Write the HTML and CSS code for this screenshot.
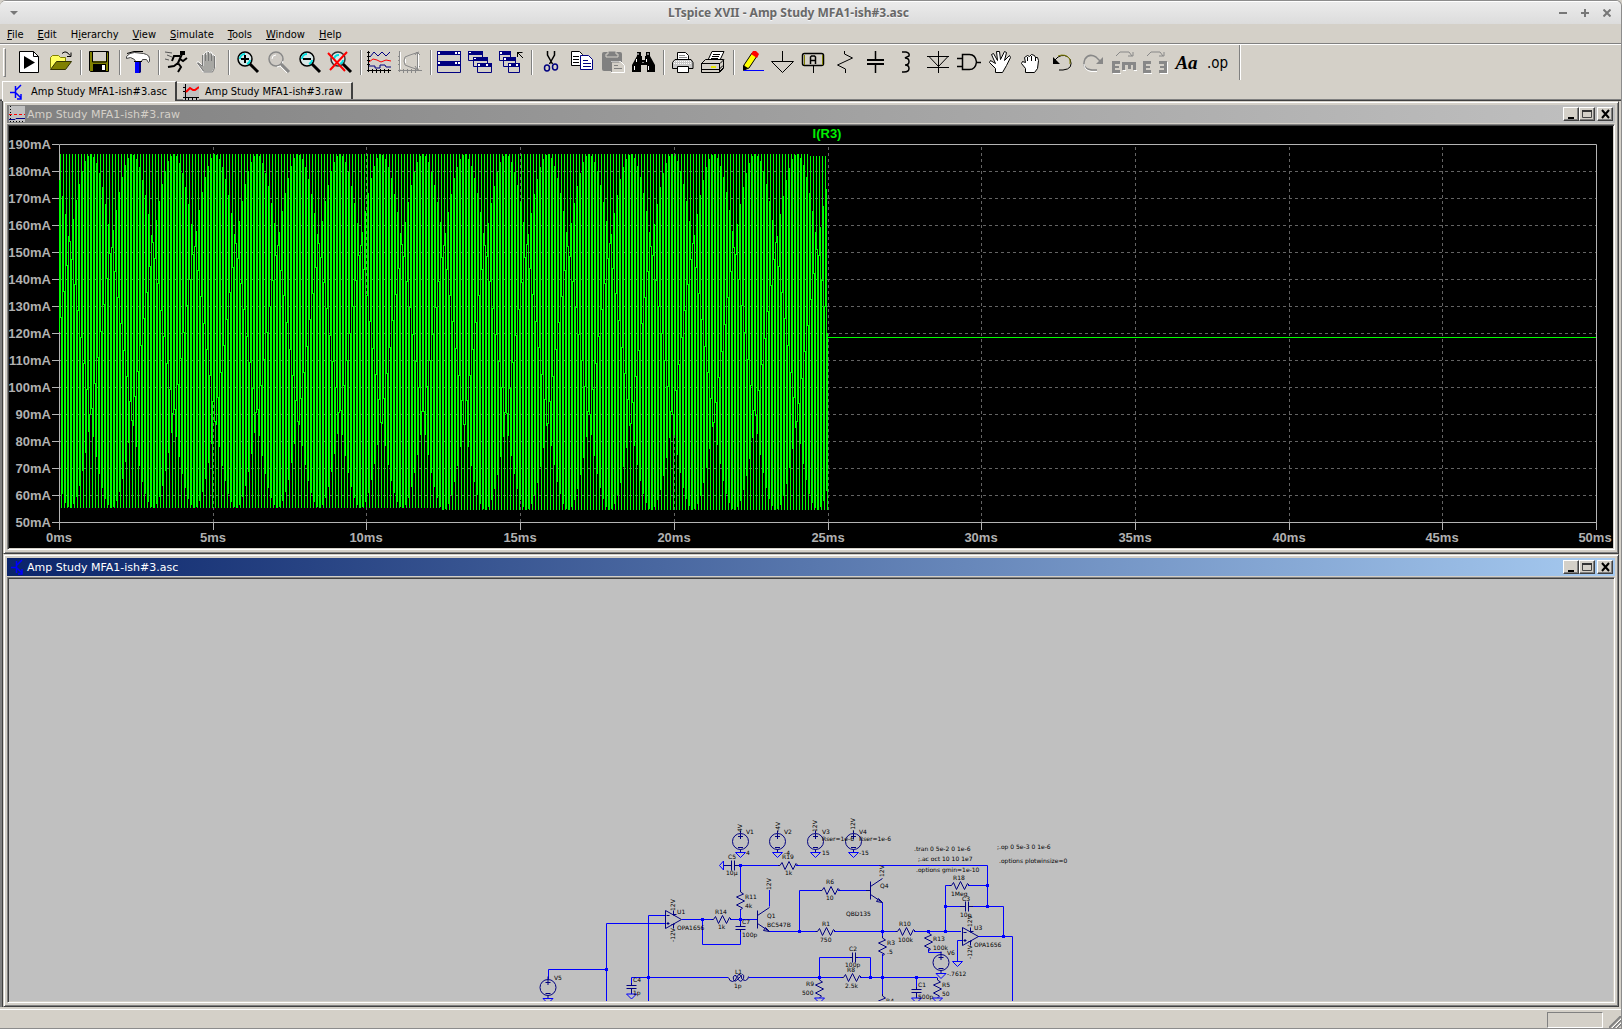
FILE: index.html
```html
<!DOCTYPE html>
<html lang="en">
<head>
<meta charset="utf-8">
<title>LTspice XVII - Amp Study MFA1-ish#3.asc</title>
<link rel="stylesheet" href="styles.css">
</head>
<body>
<div class="app">
  <header class="titlebar">
    <button class="frame-btn" aria-label="Window menu"><svg width="8" height="6"><path d="M0 1h8L4 5z" fill="#777"/></svg></button>
    <h1 class="app-title">LTspice XVII - Amp Study MFA1-ish#3.asc</h1>
    <div class="frame-btns">
      <button class="frame-btn" aria-label="Minimize"><svg width="8" height="8"><path d="M0 4h8" stroke="#777" stroke-width="2"/></svg></button>
      <button class="frame-btn" aria-label="Maximize"><svg width="8" height="8"><path d="M0 4h8M4 0v8" stroke="#777" stroke-width="2"/></svg></button>
      <button class="frame-btn" aria-label="Close"><svg width="8" height="8"><path d="M0.500 0.500l7 7M7.500 0.500l-7 7" stroke="#777" stroke-width="2"/></svg></button>
    </div>
  </header>

  <nav class="menubar" aria-label="Main menu">
    <button><u>F</u>ile</button>
    <button><u>E</u>dit</button>
    <button>H<u>i</u>erarchy</button>
    <button><u>V</u>iew</button>
    <button><u>S</u>imulate</button>
    <button><u>T</u>ools</button>
    <button><u>W</u>indow</button>
    <button><u>H</u>elp</button>
  </nav>

  <div class="toolbar" role="toolbar" aria-label="Tools">
    <span class="grip"></span>
    <button aria-label="Run"><svg viewBox="0 0 31 24"><path d="M5.500.5h14l5 5v16h-19z" fill="#fff" stroke="#000"/><path d="M19.500.5v5h5" fill="none" stroke="#000"/><path d="M10 5v13l11-6.500z"/></svg></button>
    <button aria-label="Open"><svg viewBox="0 0 31 24"><path d="M5.500 17.500v-11l2-2h6l2 2h5v4" fill="#ffff60" stroke="#808000"/><path d="M5.500 18.500l6-8h15l-6 8z" fill="#808000" stroke="#333300"/><path d="M17 2.500q4-4 8 2m1-3v4h-4" fill="none" stroke="#000"/></svg></button>
    <span class="sep"></span>
    <button aria-label="Save"><svg viewBox="0 0 31 24"><path d="M5.500.5h19v20h-18l-1-1z" fill="#808000" stroke="#000"/><path d="M9 1h13v9H9z" fill="#d4d0c8"/><path d="M8.500 1v10h14V1M22 1h2" fill="none" stroke="#000"/><path d="M9 13h13v7H9z"/><path d="M18 14h3v5h-3z" fill="#fff"/></svg></button>
    <span class="sep"></span>
    <button aria-label="Control panel"><svg viewBox="0 0 31 24"><path d="M3.500 7.500v-2q3-4 8-4l9 1 3 1q3 1 3 4v3l-1 1-2-3h-4l-1 2h-6l-1-2-4-2z" fill="#fff" stroke="#444"/><path d="M12 10h4v12h-4z" fill="#0000ff"/><path d="M16 10h2v11l-1 1h-1z" fill="#000080"/><path d="M4 2.500l7-2h9M11 10.500h8" fill="none" stroke="#000"/></svg></button>
    <span class="sep"></span>
    <button aria-label="Run simulation"><svg viewBox="0 0 31 24"><path d="M18 0h5v4h-5z"/><path d="M20 3l-4 9M18 5h-6l-2 5M18 8l3 2 4-3M16 12l-4 3-6 1M16 12l3 4-3 5" fill="none" stroke="#000" stroke-width="2"/><path d="M3 1l7 1M5 4l5 2M3 8l4 1" stroke="#555"/></svg></button>
    <button aria-label="Halt"><svg viewBox="0 0 31 24"><path d="M10 21l-6-9q0-3 3 0l3 3V4q2-3 3 0V1q2-2 3 0v1q2-2 3 0v2q2-1 3 1v11l-3 5z" fill="#a8a8a4" stroke="#fff"/><path d="M10.500 20l-6-8 5 3V4m3 6V2m3 8V1m3 9V3m3 2v12l-2 4h-9" fill="none" stroke="#777"/></svg></button>
    <span class="sep"></span>
    <button aria-label="Zoom in"><svg viewBox="0 0 31 24"><circle cx="13" cy="8" r="7" fill="#d8e8e8" stroke="#000" stroke-width="1.500"/><path d="M8 8a5 5 0 0 1 5-5M18 9a5 5 0 0 1-3 4" fill="none" stroke="#00e0e0" stroke-width="2"/><path d="M9 8h8M13 4v8" stroke="#000" stroke-width="2"/><path d="M18 13l8 8" stroke="#000" stroke-width="3"/></svg></button>
    <button aria-label="Pan"><svg viewBox="0 0 31 24"><circle cx="13" cy="8" r="7" fill="#cecac4" stroke="#888" stroke-width="1.500"/><path d="M9 8a4 4 0 0 1 4-4M20 10a7 7 0 0 1-6 6" fill="none" stroke="#fff"/><path d="M18 13l8 8" stroke="#888" stroke-width="3"/><path d="M17 15l7 7" stroke="#fff"/></svg></button>
    <button aria-label="Zoom out"><svg viewBox="0 0 31 24"><circle cx="13" cy="8" r="7" fill="#d8e8e8" stroke="#000" stroke-width="1.500"/><path d="M8 8a5 5 0 0 1 5-5M18 9a5 5 0 0 1-3 4" fill="none" stroke="#00e0e0" stroke-width="2"/><path d="M9 8h8" stroke="#000" stroke-width="2"/><path d="M18 13l8 8" stroke="#000" stroke-width="3"/></svg></button>
    <button aria-label="Zoom full extents"><svg viewBox="0 0 31 24"><circle cx="13" cy="8" r="7" fill="#d8e8e8" stroke="#333" stroke-width="1.500"/><path d="M9 8a5 5 0 0 1 5-4M18 9a5 5 0 0 1-3 4" fill="none" stroke="#00e0e0" stroke-width="2"/><path d="M18 13l8 8" stroke="#000" stroke-width="3"/><path d="M3 2l17 18M22 1L5 19" stroke="#f00" stroke-width="2"/></svg></button>
    <span class="sep"></span>
    <button aria-label="Autorange"><svg viewBox="0 0 31 24"><path d="M4.500 0v21M3 19.500h24M3 1.500h3M3 5.500h3M3 9.500h3M3 13.500h3M8.500 18v4M12.500 18v4M16.500 18v4M20.500 18v4M24.500 18v4" stroke="#000"/><path d="M6 6l4-5 4 4 4-4 4 4 4-4M5 15h6v2h5v-3h5l1 2h5" fill="none" stroke="#000080"/><path d="M5 11l4-3 4 1 4 2 5-2 5 1" fill="none" stroke="#f00"/></svg></button>
    <button aria-label="FFT"><svg viewBox="0 0 31 24"><path d="M4.500 0v21M3 19.500h24M3 5.500h3M3 9.500h3M3 13.500h3M8.500 18v4M12.500 18v4M16.500 18v4M20.500 18v4M22.500 1v17M24 1l-9 3-5 2-1 4 1 4 5 2 9 3M20 4l2-3 3 3M20 15l2 3 3-3" stroke="#888" fill="none"/><path d="M5.500 1v17M23.500 3v14M10.500 8v4" stroke="#fff"/></svg></button>
    <span class="sep"></span>
    <button aria-label="Tile"><svg viewBox="0 0 31 24"><path d="M3.500.5h23v21h-23z" fill="#d4d0c8" stroke="#000080"/><path d="M3 0h24v4H3zM3 10h24v5H3z" fill="#000080"/><path d="M4 1h2v2H4zM21 1h2v2h-2zM24 1h2v2h-2zM4 11h2v2H4zM21 11h2v2h-2zM24 11h2v2h-2z" fill="#fff"/></svg></button>
    <button aria-label="Cascade"><svg viewBox="0 0 31 24"><g fill="#d4d0c8" stroke="#000080"><path d="M3.500.5h14v9h-14zM8.500 6.500h14v9h-14zM12.500 12.500h14v9h-14z"/></g><path d="M3 0h15v4H3zM8 6h15v4H8zM12 12h15v4H12z" fill="#000080"/><path d="M4 1h2v1H4zM9 7h2v1H9zM13 13h2v2h-2zM21 13h2v2h-2z" fill="#fff"/></svg></button>
    <button aria-label="Close all"><svg viewBox="0 0 31 24"><g fill="#d4d0c8" stroke="#000080"><path d="M3.500.5h11v9h-11zM7.500 6.500h12v9h-12zM12.500 12.500h11v9h-11z"/></g><path d="M3 0h12v4H3zM7 6h13v4H7zM12 12h12v4H12z" fill="#000080"/><path d="M4 1h2v2H4zM8 7h2v2H8zM13 13h2v2h-2zM20 13h2v2h-2z" fill="#fff"/><path d="M21.500 6V1.500h5M21 1l6 6" fill="none" stroke="#000"/></svg></button>
    <span class="sep"></span>
    <button aria-label="Cut"><svg viewBox="0 0 31 24"><path d="M12.500 0v4l5 9M19.500 0v4l-5 9" fill="none" stroke="#000" stroke-width="1.500"/><g fill="none" stroke="#000080" stroke-width="1.500"><ellipse cx="12" cy="17" rx="2.500" ry="3"/><ellipse cx="20" cy="16" rx="2.500" ry="3"/></g></svg></button>
    <button aria-label="Copy"><svg viewBox="0 0 31 24"><path d="M5.500.5h8l3 3v11h-11z" fill="#fff" stroke="#000"/><path d="M7 5.500h6M7 8.500h6M7 11.500h6" stroke="#000"/><path d="M14.500 4.500h8l4 4v10h-12z" fill="#fff" stroke="#000080"/><path d="M17 9.500h5M17 12.500h8M17 15.500h8" stroke="#000080"/></svg></button>
    <button aria-label="Paste"><svg viewBox="0 0 31 24"><rect x="5" y="1" width="20" height="19" rx="2" fill="#808080"/><path d="M11 0h8v3h2v3H9V3h2z" fill="#808080" stroke="#d4d0c8"/><path d="M14.500 10.500h9l4 4v7h-13z" fill="#d4d0c8" stroke="#fff"/><path d="M17 14.500h4M17 17.500h8M14.500 21v-10h8" fill="none" stroke="#808080"/></svg></button>
    <button aria-label="Find"><svg viewBox="0 0 31 24"><path d="M9 1h4v4h1v4h3V5h1V1h4v4l5 9v7h-8v-7h-6v7H4v-7l5-9z"/><path d="M10 2v2M20 2v2M8.500 8v3M18.500 8v3M6.500 15v4M20.500 15v4M15 11v1" stroke="#fff"/></svg></button>
    <span class="sep"></span>
    <button aria-label="Print"><svg viewBox="0 0 31 24"><path d="M10.500 8.500v-7h8l3 3v4" fill="#fff" stroke="#000"/><path d="M12 4.500h6M12 6.500h8" stroke="#888"/><path d="M8 8.500h16l2 3v6H5.500v-6z" fill="#c8c8c8" stroke="#000"/><path d="M10.500 15.500h11v6h-11z" fill="#fff" stroke="#000"/><path d="M7 10.500h17M7 12.500h17" stroke="#fff" stroke-dasharray="1"/></svg></button>
    <button aria-label="Print setup"><svg viewBox="0 0 31 24"><path d="M10 9l4-8.500h12L22 9z" fill="#fff" stroke="#000"/><path d="M15 3.500h7M14 5.500h7M13 7.500h7" stroke="#000"/><path d="M3.500 12.500l4-4h18v9l-4 4h-18z" fill="#d4d0c8" stroke="#000"/><path d="M3 12.500h19l4-4M21.500 12v9M3 18.500h18l4-4M21 21l5-5" fill="none" stroke="#000"/><path d="M13 15h5v2h-5z" fill="#e8e800"/></svg></button>
    <span class="sep"></span>
    <button aria-label="Wire"><svg viewBox="0 0 31 24"><path d="M7 19v-5l8-12 5 3-8 12z" fill="#ff0" stroke="#000"/><path d="M14 3l2-3h3l3 3-2 4z" fill="#f00"/><path d="M6 14l5 3-5 3z"/><path d="M7 19.500h20" stroke="#00f"/></svg></button>
    <button aria-label="Ground"><svg viewBox="0 0 31 24"><path d="M14.500 0v10.500M3.500 10.500h22l-11 11z" fill="none" stroke="#000"/></svg></button>
    <button aria-label="Label net"><svg viewBox="0 0 31 24"><rect x="3.500" y="2.500" width="21" height="12" rx="2" fill="none" stroke="#000" stroke-width="1.500"/><path d="M5.500 4v10M23.500 4v10" stroke="#808000"/><path d="M11.500 13V6l1-1h3l1 1v7M11 9.500h6" fill="none" stroke="#000" stroke-width="1.500"/><path d="M14.500 15v7" stroke="#000"/></svg></button>
    <button aria-label="Resistor"><svg viewBox="0 0 31 24"><path d="M14.500 0v3l8 4-15 7 8 4v4" fill="none" stroke="#000"/></svg></button>
    <button aria-label="Capacitor"><svg viewBox="0 0 31 24"><path d="M14.500 0v9M14.500 13v9" stroke="#000" stroke-width="1.500"/><path d="M6 9h17M6 13h17" stroke="#000" stroke-width="2"/></svg></button>
    <button aria-label="Inductor"><svg viewBox="0 0 31 24"><path d="M10 1h4q4 1 3 4l-4 2q4 0 4 3.500T13 14q4 0 4 3.500T12 21h-2" fill="none" stroke="#000" stroke-width="1.500"/></svg></button>
    <button aria-label="Diode"><svg viewBox="0 0 31 24"><path d="M15.500 0v22M4 5.500h22M4 16.500h22M6 5.500l9.500 10 9.500-10" fill="none" stroke="#000"/></svg></button>
    <button aria-label="Component"><svg viewBox="0 0 31 24"><path d="M8.500 3.500h7q6 0 7 7.500-1 7.500-7 7.500h-7zM3 7.500h5M3 15.500h5M23 11.500h4" fill="none" stroke="#000" stroke-width="1.500"/></svg></button>
    <button aria-label="Move"><svg viewBox="0 0 31 24"><path d="M10.500 21.500v-4l-6-6 1-2 5 3-4-9 2-1 4 7-1-9h3l1 8 4-8 2 1-2 8 5-5 1 2-4 8-4 7z" fill="#fff" stroke="#000"/></svg></button>
    <button aria-label="Drag"><svg viewBox="0 0 31 24"><path d="M9.500 21.500v-4l-4-5 1-2 3 1-1-5 3-2 2 1 2-2 3 1 1 2h2l1 3-1 8-3 4z" fill="#fff" stroke="#000"/><path d="M11.500 6v4M15.500 5v5M19.500 6v4" stroke="#000"/></svg></button>
    <button aria-label="Undo"><svg viewBox="0 0 31 24"><path d="M7 10l4-4q7-4 12 2 4 10-7 11h-4" fill="none" stroke="#000"/><path d="M11 5q7-3 12 3v5" fill="none" stroke="#808000"/><path d="M6 6v7h7z"/></svg></button>
    <button aria-label="Redo"><svg viewBox="0 0 31 24"><path d="M22 10l-4-4Q11 2 7 8 3 18 14 19h5" fill="none" stroke="#888" stroke-width="1.500"/><path d="M19 20.500h-6Q6 19 6 13" fill="none" stroke="#fff"/><path d="M25 6v7h-7z" fill="#888"/></svg></button>
    <button aria-label="Rotate"><svg viewBox="0 0 31 24"><path d="M7 5l4-4h9l3 4M19 5h5V1" fill="none" stroke="#888"/><path d="M3 10h8v3H6v2h4v2H6v2h5v3H3zM13 11h14v8h-3v-5h-2v4h-3v-4h-3v5h-3z" fill="#888"/><path d="M4 22.500h8M14 19.500h3M25 19.500h3" stroke="#fff"/></svg></button>
    <button aria-label="Mirror"><svg viewBox="0 0 31 24"><path d="M7 5l4-4h9l3 4M19 5h5V1" fill="none" stroke="#888"/><path d="M3 10h8v3H6v2h4v2H6v2h5v3H3zM27 10h-8v3h5v2h-4v2h4v2h-5v3h8z" fill="#888"/><path d="M4 22.500h8M20 22.500h8M27.500 11v11" stroke="#fff"/></svg></button>
    <button aria-label="Text"><span class="aa">Aa</span></button>
    <button aria-label="SPICE directive"><span class="op">.op</span></button>
    <span class="end"></span>
  </div>

  <div class="tabs" role="tablist">
    <button class="tab active" role="tab" aria-selected="true"><svg width="14" height="16"><path d="M5.500 2v12M0 8.500h5M6 6l5-5M6 9l5 5M11 10v5H7" stroke="#00f" stroke-width="1.500" fill="none"/></svg>Amp Study MFA1-ish#3.asc</button>
    <button class="tab" role="tab" aria-selected="false"><svg width="16" height="16"><path d="M0 0h16v16H0z" fill="#c0c0c0"/><path d="M2.500 0v16M0 13.500h16M0 3.500h2M0 7.500h2M5.500 13v3M9.500 13v3M13.500 13v3" stroke="#000"/><path d="M3 8l4-4 3 2h2l4-3" stroke="#f00" stroke-width="2" fill="none"/></svg>Amp Study MFA1-ish#3.raw</button>
  </div>

  <main class="mdi">
    <section class="child">
      <div class="child-title inactive">
        <svg width="16" height="16"><path d="M0 0h16v16H0z" fill="#c0c0c0"/><path d="M0 8.500h16" stroke="#f00" stroke-dasharray="3 2"/><path d="M0 13.500h6l1-1h9" stroke="#000080" fill="none"/><path d="M1.500 0v16M1 15.500h15" stroke="#000" stroke-dasharray="1 2"/></svg>
        <h2>Amp Study MFA1-ish#3.raw</h2>
        <button class="cap" aria-label="Minimize"><svg width="12" height="10"><path d="M3 9h6" stroke="#000" stroke-width="2"/></svg></button><button class="cap" aria-label="Maximize"><svg width="12" height="10"><path d="M1.500 1.500h9v7h-9z" fill="none" stroke="#444"/><path d="M1 2h10" stroke="#333" stroke-width="2"/></svg></button><button class="cap close" aria-label="Close"><svg width="12" height="10"><path d="M3 1l7 8M10 1L3 9" stroke="#000" stroke-width="2"/></svg></button>
      </div>
      <div class="client plot"><svg class="wave" role="img" aria-label="Current through R3"></svg></div>
    </section>

    <section class="child">
      <div class="child-title">
        <svg width="16" height="16"><path d="M7.500 2v12M2 8.500h5M8 6l5-5M8 9l5 5M13 10v5H9" stroke="#00f" stroke-width="1.500" fill="none"/></svg>
        <h2>Amp Study MFA1-ish#3.asc</h2>
        <button class="cap" aria-label="Minimize"><svg width="12" height="10"><path d="M3 9h6" stroke="#000" stroke-width="2"/></svg></button><button class="cap" aria-label="Maximize"><svg width="12" height="10"><path d="M1.500 1.500h9v7h-9z" fill="none" stroke="#444"/><path d="M1 2h10" stroke="#333" stroke-width="2"/></svg></button><button class="cap close" aria-label="Close"><svg width="12" height="10"><path d="M3 1l7 8M10 1L3 9" stroke="#000" stroke-width="2"/></svg></button>
      </div>
      <div class="client">
        <svg class="schematic" role="img" aria-label="Amplifier schematic">
          <defs>
            <path id="r" d="M-10 0h2l2-3 3 7 4-8 4 8 3-6 2 2"/>
            <path id="c" d="M-5-1.500H5M-5 1.500H5M0-4v2.500M0 1.500V4"/>
            <path id="g" class="w" d="M-5 0H5L0 5z"/>
            <g id="v"><circle r="8"/><path d="M-2.500-5h5M0-7.500v5M-2.500 6h5M0-8v-3M0 8v3"/><use href="#g" y="11"/></g>
            <rect id="d" class="dot" x="-1" y="-1" width="2" height="2"/>
            <g id="u"><path d="M-8-9V9L8 0zM-7-4h3M-7 4h3M-5.500 2.500v3M0-9v5M0 4v5M0-5h3M-2 5h3"/></g>
            <path id="q" d="M0-9V9M0-4l12-8M0 4l12 8M12 12l-4-4-2 3z"/>
          </defs>
          <g transform="translate(-9 -579)">
            <g class="w">
              <path d="M740.500 865.500H779M796 865.500h191.500v41h16v30M740.500 865.500V892M740.500 909v17M740.500 929v15.500h-38v-25M682 919.500h30M730 919.500h27M769.500 906.500V890M769.500 931.500H816M834 931.500h62M914 931.500h47M799.500 931.500v-41H821M838 890.500h28M882.500 903v34M882.500 954v41M665 915.500h-16.500V1005M665 923.500h-58.500V1005M606.500 969.500h-58V979M631.500 977.500H728M749 977.500h94M860 977.500h77.500M631.500 977.500v6M819.500 977.500v-20H852M855 957.500h15.500v20M916.500 977.500V988M945.500 931.500v-46H951M968 885.500h19.500M945.500 906.500H965M969 906.500h18.500M978 936.500h34.500V1005M962 940.500h-4.500v21M928.500 949v3.500h13"/>
            </g>
            <g class="p">
              <use href="#v" x="740.500" y="841.500"/><use href="#v" x="777.500" y="841.500"/><use href="#v" x="815.500" y="841.500"/><use href="#v" x="853.500" y="841.500"/><use href="#v" x="548" y="987.500"/><use href="#v" x="941" y="962.500"/>
              <use href="#r" x="788" y="865.500"/><use href="#r" x="721.500" y="919.500"/><use href="#r" x="825.500" y="931.500"/><use href="#r" x="905.500" y="931.500"/><use href="#r" x="830" y="890.500"/><use href="#r" x="959.500" y="885.500"/><use href="#r" x="851.500" y="977.500"/>
              <g transform="translate(740.500 900) rotate(90)"><use href="#r"/></g>
              <g transform="translate(882.500 946) rotate(90)"><use href="#r"/></g>
              <g transform="translate(928.500 941) rotate(90)"><use href="#r"/></g>
              <g transform="translate(819.500 988) rotate(90)"><use href="#r"/></g>
              <g transform="translate(937.500 988) rotate(90)"><use href="#r"/></g>
              <g transform="translate(882.500 1004) rotate(90)"><use href="#r"/></g>
              <use href="#c" x="740.500" y="928"/><use href="#c" x="631.500" y="987"/><use href="#c" x="916.500" y="991"/>
              <g transform="translate(733 865.500) rotate(90)"><use href="#c"/></g>
              <g transform="translate(854 957.500) rotate(90)"><use href="#c"/></g>
              <g transform="translate(967 906.500) rotate(90)"><use href="#c"/></g>
              <path d="M723 865.500h6M737 865.500h4M631.500 991v3M916.500 995v3M970 906.500h3M960 906.500h3M866 890.500h4.500"/>
              <path d="M728.500 977.500q1 4 4 4 4-1 4-4t-2-2-1 4 3 1 4-4q0-3-2-2t0 5 5-1q1-4-1-4t-1 4q2 2 4 2 3-1 3-4"/>
              <use href="#u" x="673.500" y="919.500"/><use href="#u" x="970.500" y="936.500"/>
              <use href="#q" x="757.500" y="919.500"/><use href="#q" x="870.500" y="890.500"/>
            </g>
            <use href="#g" x="631.500" y="994"/><use href="#g" x="916.500" y="998"/><use href="#g" x="937.500" y="998"/><use href="#g" x="819.500" y="998"/><use href="#g" x="957.500" y="961.500"/>
            <path class="w" d="M723.500 861v9l-4-4.500z"/>
            <use href="#d" x="740.500" y="865.500"/><use href="#d" x="740.500" y="919.500"/><use href="#d" x="702.500" y="919.500"/><use href="#d" x="799.500" y="931.500"/><use href="#d" x="882.500" y="931.500"/><use href="#d" x="928.500" y="931.500"/><use href="#d" x="945.500" y="931.500"/><use href="#d" x="945.500" y="906.500"/><use href="#d" x="987.500" y="906.500"/><use href="#d" x="987.500" y="885.500"/><use href="#d" x="1003.500" y="936.500"/><use href="#d" x="606.500" y="969.500"/><use href="#d" x="648.500" y="977.500"/><use href="#d" x="819.500" y="977.500"/><use href="#d" x="870.500" y="977.500"/><use href="#d" x="882.500" y="977.500"/><use href="#d" x="916.500" y="977.500"/>
            <g class="t">
              <text x="746" y="834">V1</text><text x="746" y="855">4</text><text x="784" y="834">V2</text><text x="784" y="855">-4</text><text x="822" y="834">V3</text><text x="822" y="841">Rser=1e-6</text><text x="822" y="855">15</text><text x="859" y="834">V4</text><text x="859" y="841">Rser=1e-6</text><text x="859" y="855">-15</text>
              <text x="554" y="980">V5</text><text x="947" y="955">V6</text><text x="947" y="976">-.7612</text>
              <text x="728" y="859">C5</text><text x="726" y="875">10µ</text><text x="782" y="859">R19</text><text x="785" y="875">1k</text><text x="745" y="899">R11</text><text x="745" y="908">4k</text><text x="742" y="924">C7</text><text x="742" y="937">100p</text><text x="715" y="914">R14</text><text x="718" y="929">1k</text><text x="767" y="918">Q1</text><text x="767" y="927">BC547B</text><text x="677" y="914">U1</text><text x="677" y="930">OPA1656</text>
              <text x="735" y="974">L1</text><text x="734" y="988">1p</text><text x="633" y="982">C4</text><text x="633" y="995">1p</text>
              <text x="826" y="884">R6</text><text x="826" y="900">10</text><text x="880" y="888">Q4</text><text x="846" y="916">QBD135</text><text x="822" y="926">R1</text><text x="820" y="942">750</text><text x="899" y="926">R10</text><text x="898" y="942">100k</text><text x="887" y="945">R3</text><text x="887" y="954">.5</text><text x="933" y="941">R13</text><text x="933" y="950">100k</text><text x="953" y="880">R18</text><text x="951" y="896">1Meg</text><text x="962" y="901">C3</text><text x="960" y="917">10p</text><text x="974" y="930">U3</text><text x="974" y="947">OPA1656</text>
              <text x="849" y="951">C2</text><text x="845" y="967">100p</text><text x="847" y="972">R8</text><text x="845" y="988">2.5k</text><text x="918" y="987">C1</text><text x="918" y="999">500p</text><text x="942" y="987">R5</text><text x="942" y="996">50</text><text x="806" y="986">R9</text><text x="802" y="995">500</text><text x="886" y="1003">R4</text>
              <text x="914" y="851">.tran 0 5e-2 0 1e-6</text><text x="918" y="861">;.ac oct 10 10 1e7</text><text x="916" y="872">.options gmin=1e-10</text><text x="997" y="849">;.op 0 5e-3 0 1e-6</text><text x="999" y="863">.options plotwinsize=0</text>
              <text transform="translate(742 832) rotate(-90)">4V</text><text transform="translate(780 832) rotate(-90)">-4V</text><text transform="translate(817 832) rotate(-90)">12V</text><text transform="translate(855 832) rotate(-90)">-12V</text><text transform="translate(771 890) rotate(-90)">12V</text><text transform="translate(675 911) rotate(-90)">12V</text><text transform="translate(675 942) rotate(-90)">-12V</text><text transform="translate(884 877) rotate(-90)">12V</text><text transform="translate(972 927) rotate(-90)">12V</text><text transform="translate(972 959) rotate(-90)">-12V</text>
            </g>
          </g>
        </svg>
      </div>
    </section>
  </main>

  <footer class="status"><span class="cell"></span><svg width="12" height="12"><path d="M0 12L12 0M4 12l8-8M8 12l4-4" stroke="#808080" stroke-width="2"/><path d="M2 13L13 2M6 13l7-7" stroke="#fff"/></svg></footer>
</div>
<script src="plot.js"></script>
</body>
</html>
```
FILE: styles.css
```css
* { box-sizing: border-box; }
body { margin: 0; background: #d4d0c8; color: #000; font: 11px/16px "DejaVu Sans Condensed", "DejaVu Sans", sans-serif; }
button { margin: 0; padding: 0; border: 0; background: none; color: inherit; font: inherit; }
svg { display: block; }
h1, h2 { margin: 0; }

.app { display: flex; flex-direction: column; height: 100vh; border: 1px solid #8c8c8c; border-left-width: 0; border-radius: 6px 6px 0 0; background: #d4d0c8; overflow: hidden; }

.titlebar { display: flex; align-items: center; height: 23px; padding: 0 10px; border-top: 1px solid #fff; background: linear-gradient(#ebebeb, #dcdcdc); }
.app-title { flex: 1; text-align: center; font: bold 12px/20px "Noto Sans", sans-serif; color: #686868; text-shadow: 0 1px 0 #f6f6f6; }
.frame-btns { display: flex; gap: 14px; }

.menubar { display: flex; gap: 14px; height: 21px; padding: 2px 7px 0; border-bottom: 1px solid #fff; box-shadow: inset 0 -1px #808080; }

.toolbar { display: flex; align-items: flex-start; height: 36px; padding-left: 3px; }
.toolbar button { width: 31px; height: 30px; padding-top: 6px; }
.toolbar svg { width: 31px; height: 24px; }
.grip { width: 3px; height: 29px; margin: 3px 8px 0 0; border: 1px solid; border-color: #fff #808080 #808080 #fff; }
.sep { width: 2px; height: 25px; margin: 5px 2px 0 4px; border-left: 1px solid #808080; border-right: 1px solid #fff; }
.end { width: 2px; height: 35px; margin-left: 6px; border-left: 1px solid #808080; border-right: 1px solid #fff; }
.aa { font: italic bold 19px/22px "Liberation Serif", serif; }
.op { font: 15px/20px "DejaVu Sans Condensed", sans-serif; }

.tabs { display: flex; align-items: flex-end; height: 20px; padding-left: 2px; border-bottom: 1px solid #404040; box-shadow: inset 0 -1px #808080; }
.tab { display: flex; align-items: center; height: 17px; padding: 1px 8px 0 6px; gap: 6px; border-top: 1px solid #fff; border-right: 2px solid #404040; margin-bottom: 1px; }
.tab.active { height: 20px; margin-bottom: -1px; padding: 0 8px 0 7px; gap: 7px; border-left: 1px solid #fff; background: #d4d0c8; }

.mdi { flex: 1; min-height: 0; display: flex; flex-direction: column; padding: 0 2px 0 1px; border-left: 2px solid #808080; box-shadow: inset 1px 0 #404040; }
.child { flex: 1; min-height: 0; display: flex; flex-direction: column; padding: 3px; border: 1px solid; border-color: #d4d0c8 #404040 #404040 #d4d0c8; box-shadow: inset 1px 1px #fff, inset -1px -1px #808080; }
.child-title { display: flex; align-items: center; height: 18px; margin-bottom: 1px; padding: 0 2px; color: #fff; background: linear-gradient(90deg, #0a246a, #a6caf0); }
.child-title.inactive { color: #d4d0c8; background: linear-gradient(90deg, #808080, #c0c0c0); }
.child-title h2 { flex: 1; padding: 2px 0 0 2px; font: 11px/16px "DejaVu Sans", sans-serif; }
.cap { width: 16px; height: 14px; padding: 1px; border: 1px solid; border-color: #fff #404040 #404040 #fff; box-shadow: inset -1px -1px #808080; background: #d4d0c8; }
.cap.close { margin-left: 2px; }
.client { flex: 1; min-height: 0; overflow: hidden; border: 1px solid; border-color: #808080 #fff #fff #808080; background: #c0c0c0; box-shadow: inset 1px 1px #404040, inset -1px -1px #d4d0c8; padding: 1px; }
.client.plot { background: #000; }
.wave, .schematic { width: 100%; height: 100%; }
.wave text { font: bold 13px "Liberation Sans", sans-serif; fill: #b0b0b0; }
.wave .trace-name { fill: #00f000; }

.schematic { fill: none; stroke-width: 1; }
.w { stroke: #00f; fill: none; }
.p { stroke: #000080; }
.dot { fill: #00f; stroke: #00f; }
.t { fill: #000; font: 6px "DejaVu Sans", sans-serif; }

.status { display: flex; justify-content: flex-end; align-items: flex-end; height: 21px; box-shadow: inset 0 2px #d4d0c8, inset 0 3px #fff; }
.cell { width: 56px; height: 16px; margin-right: 6px; border: 1px solid; border-color: #808080 #fff #fff #808080; }
```
FILE: plot.js
```js
// Draws the transient current plot, one filled column per pixel.
const svg = document.querySelector('.wave');
const NS = 'http://www.w3.org/2000/svg';

function add(name, attrs, text) {
  const el = document.createElementNS(NS, name);
  for (const k in attrs) el.setAttribute(k, attrs[k]);
  if (text) el.textContent = text;
  svg.appendChild(el);
}

function draw() {
  svg.replaceChildren();
  const W = svg.clientWidth, H = svg.clientHeight;
  const left = 50, right = W - 17, top = 18, bottom = H - 26;
  const px = ms => Math.round(left + (right - left) * ms / 50);
  const py = mA => Math.round(top + (bottom - top) * (190 - mA) / 140);
  let grid = '', axis = `M${left + .5} ${bottom + 8}V${top + .5}H${right + .5}V${bottom + 8}`;

  for (let mA = 50; mA <= 190; mA += 10) {
    const y = py(mA) + .5;
    axis += `M${left - 7} ${y}h7`;
    if (mA > 50 && mA < 190) grid += `M${left} ${y}H${right}`;
    add('text', { x: left - 8, y: py(mA) + 5, 'text-anchor': 'end' }, mA + 'mA');
  }
  for (let ms = 0; ms <= 50; ms += 5) {
    const x = px(ms) + .5;
    axis += `M${x} ${bottom}v8`;
    if (ms > 0 && ms < 50) grid += `M${x} ${top + 3}V${bottom}`;
    add('text', { x: Math.min(px(ms), W - 18), y: bottom + 20, 'text-anchor': 'middle' }, ms + 'ms');
  }
  axis += `M${left} ${bottom + .5}H${right}`;
  add('path', { d: grid, stroke: '#646464', 'stroke-dasharray': '3 3', fill: 'none' });
  add('path', { d: axis, stroke: '#b4b4b4', fill: 'none' });

  // 10 kHz tone for 25 ms, then quiescent current
  const cycles = 250, span = (right - left) / 2, end = px(25);
  const phase = x => (x - left) / span * cycles;
  let d = '';
  for (let x = left; x < end; x++) {
    const a = Math.max(0, phase(x - .5)), b = phase(x + .5);
    const sa = Math.sin(2 * Math.PI * a), sb = Math.sin(2 * Math.PI * b);
    const hi = Math.floor(b - .25) > Math.floor(a - .25) ? 1 : Math.max(sa, sb);
    const lo = Math.floor(b - .75) > Math.floor(a - .75) ? -1 : Math.min(sa, sb);
    const yHi = py(x > end - 20 ? 185.5 : 186.2), yLo = py(x < left + span * .495 ? 55.4 : 54.8);
    const mid = (yHi + yLo) / 2, amp = (yLo - yHi) / 2;
    d += `M${x} ${Math.round(mid - amp * hi)}h1V${Math.round(mid - amp * lo) + 1}h-1z`;
  }
  d += `M${end} ${py(118.5)}H${right}v1H${end}z`;
  add('path', { d, fill: '#0f0', 'shape-rendering': 'crispEdges' });
  add('text', { x: Math.round((left + right) / 2) - 1, y: 12, 'text-anchor': 'middle', class: 'trace-name' }, 'I(R3)');
}

draw();
window.addEventListener('resize', draw);
```
